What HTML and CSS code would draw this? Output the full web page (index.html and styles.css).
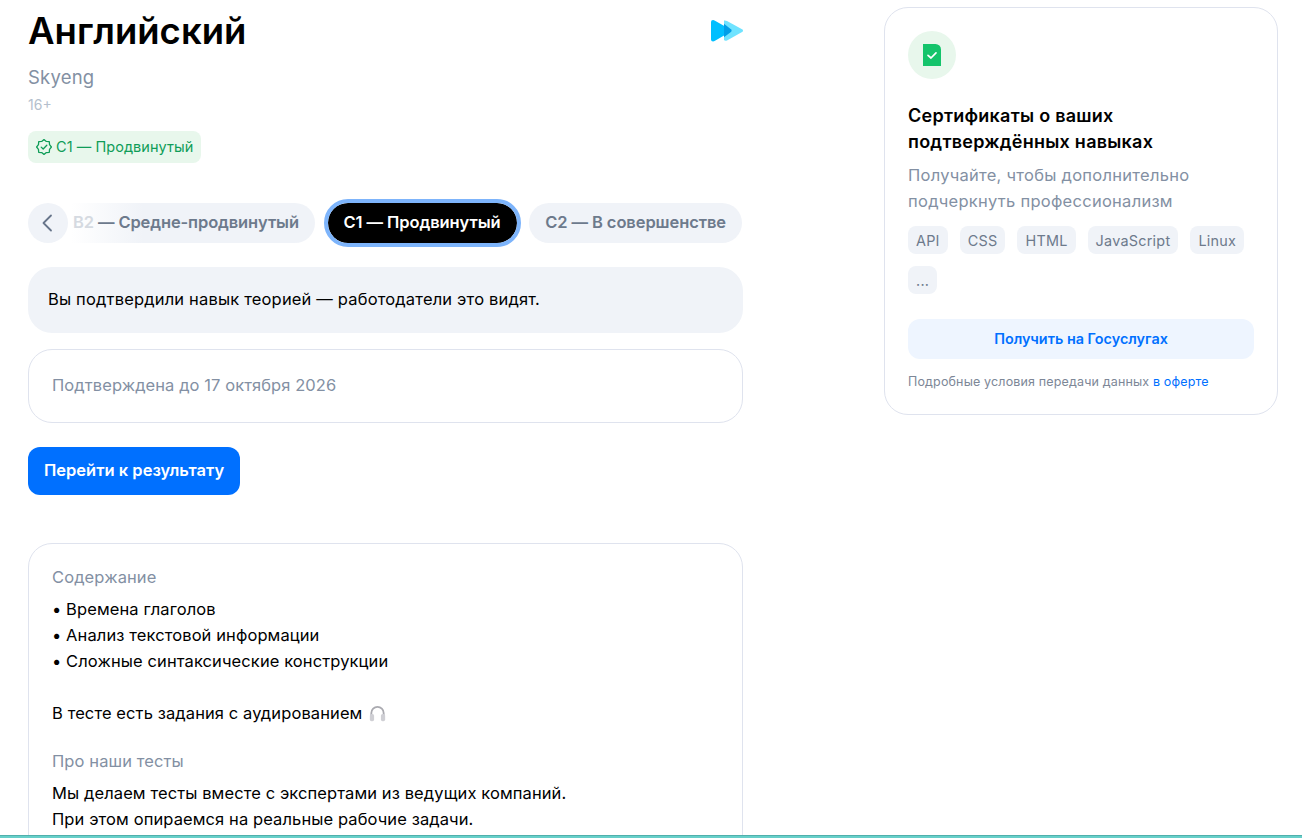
FILE: index.html
```html
<!DOCTYPE html>
<html lang="ru">
<head>
<meta charset="utf-8">
<title>Английский</title>
<link rel="stylesheet" href="styles.css">
</head>
<body>
<div class="page">
  <main class="main">
    <header class="head">
      <div>
        <h1 class="title">Английский</h1>
        <div class="vendor">Skyeng</div>
        <div class="age">16+</div>
      </div>
      <svg class="logo" width="32.5" height="24" viewBox="1 0 32.5 24">
        <path d="M14 1.5 Q15.5 1.200 17 2 L32.500 10.600 Q33.500 11.700 32.500 12.800 L17 21.500 Q15 22.300 14 21 Z" fill="#6fe3ff"/>
        <path d="M1 3 Q1 1 3 1 Q4 1 5 1.700 L20.500 10.600 Q22 11.700 20.500 12.800 L5 21.800 Q4 22.400 3 22.400 Q1 22.400 1 20.400 Z" fill="#00bfff"/>
        <path d="M14 4.700 L21.200 10.600 Q22 11.700 21.200 12.800 L14 18.300 Z" fill="#009ee8"/>
      </svg>
    </header>
    <div class="badge">
      <svg width="16" height="16" viewBox="0 0 16 16" fill="none" stroke="#0f9d58" stroke-width="1.300" stroke-linejoin="round" stroke-linecap="round">
        <path d="M8 .6 10.300 2.460 13.300 2.700 13.540 5.700 15.400 8 13.540 10.300 13.300 13.300 10.300 13.540 8 15.400 5.700 13.540 2.700 13.300 2.460 10.300 .6 8 2.460 5.700 2.700 2.700 5.700 2.460Z"/>
        <path d="M5.200 8.100 7.200 10 10.800 6.300"/>
      </svg>
      <span>C1 — Продвинутый</span>
    </div>
    <div class="levels">
      <div class="level level-fade"><span class="fade-text">B2</span> — Средне-продвинутый</div>
      <div class="level level-active">C1 — Продвинутый</div>
      <div class="level">C2 — В совершенстве</div>
      <button class="back" aria-label="Назад">
        <svg class="back-icon" width="12" height="18" viewBox="0 0 12 18" fill="none" stroke="#67758a" stroke-width="1.800" stroke-linecap="round" stroke-linejoin="round"><path d="M10 1.500 2.500 9l7.500 7.500"/></svg>
      </button>
    </div>
    <div class="note">Вы подтвердили навык теорией — работодатели это видят.</div>
    <div class="valid">Подтверждена до 17 октября 2026</div>
    <a class="primary" href="#">Перейти к результату</a>
    <section class="content">
      <div class="label">Содержание</div>
      <p class="line">• Времена глаголов</p>
      <p class="line">• Анализ текстовой информации</p>
      <p class="line">• Сложные синтаксические конструкции</p>
      <p class="line line-gap">В тесте есть задания с аудированием <svg class="phones" width="17" height="17" viewBox="0 0 16 16" fill="none"><path d="M2.200 10V7.500a5.800 5.800 0 0 1 11.600 0V10" stroke="#aaaab0" stroke-width="1.700"/><rect x=".8" y="8.500" width="4" height="6.800" rx="1.600" fill="#cfcfd4"/><rect x="11.200" y="8.500" width="4" height="6.800" rx="1.600" fill="#cfcfd4"/></svg></p>
      <div class="label label-gap">Про наши тесты</div>
      <p class="line">Мы делаем тесты вместе с экспертами из ведущих компаний.</p>
      <p class="line">При этом опираемся на реальные рабочие задачи.</p>
    </section>
  </main>
  <aside class="card">
    <div class="card-icon">
      <svg width="18" height="22" viewBox="0 0 18 22"><path d="M0 0H12.500A5.500 5.500 0 0 1 18 5.500V22H0Z" fill="#14c46b"/><path d="M5 11.300 8 14 13 8.800" fill="none" stroke="#fff" stroke-width="1.700" stroke-linecap="round" stroke-linejoin="round"/></svg>
    </div>
    <h2 class="card-title">Сертификаты о ваших подтверждённых навыках</h2>
    <p class="card-text">Получайте, чтобы дополнительно подчеркнуть профессионализм</p>
    <div class="tags">
      <span class="tag">API</span><span class="tag">CSS</span><span class="tag">HTML</span><span class="tag">JavaScript</span><span class="tag">Linux</span><span class="tag">...</span>
    </div>
    <a class="secondary" href="#">Получить на Госуслугах</a>
    <p class="terms">Подробные условия передачи данных <a href="#">в оферте</a></p>
  </aside>
</div>
<div class="bottom-bar"></div>
</body>
</html>
```
FILE: styles.css
```css
* { box-sizing: border-box; }
html, body { height: 100%; margin: 0; overflow: hidden; }
body { font-family: Inter, "Noto Sans", sans-serif; color: #000; background: #fff; position: relative; }
.page { display: flex; align-items: flex-start; padding: 7px 24px 0 28px; gap: 141px; height: 835px; overflow: hidden; }
.main { width: 715px; flex: none; margin-top: -7px; }
.head { display: flex; justify-content: space-between; align-items: flex-start; }
.title { margin: 8px 0 0; font-size: 36.500px; line-height: 46px; font-weight: 600; }
.vendor { margin-top: 10px; font-size: 18.500px; line-height: 26px; color: #8390a3; letter-spacing: .2px; }
.age { margin-top: 5px; font-size: 14px; line-height: 20px; color: #b4bfcd; }
.logo { margin-top: 19px; }
.badge { display: inline-flex; align-items: center; gap: 4px; height: 32px; margin-top: 16px; padding: 0 8px 1px; border-radius: 8px; background: #e8f7ec; color: #0f9d58; font-size: 14.500px; letter-spacing: .05px; }
.levels { position: relative; display: flex; align-items: center; gap: 12.500px; margin-top: 36px; height: 48px; }
.level { display: flex; align-items: center; height: 40px; padding: 0 16px 3px; border-radius: 20px; background: #f0f3f8; color: #6d7a8c; font-size: 16.500px; font-weight: 600; white-space: nowrap; letter-spacing: -.08px; }
.level-fade { width: 287px; padding-left: 45px; background: linear-gradient(90deg, #fff 15%, #f0f3f8 40%); white-space: pre; letter-spacing: -.12px; }
.fade-text { color: #d5dae1; }
.level-active { background: #000; color: #fff; outline: 4px solid #7db4fb; }
.back { position: absolute; left: 0; top: 4px; width: 40px; height: 40px; border: 0; padding: 0; border-radius: 50%; background: #f0f3f8; display: flex; align-items: center; justify-content: center; }
.back-icon { margin-right: 2px; }
.note { margin-top: 20px; height: 66px; display: flex; align-items: center; padding: 0 20px 3px; border-radius: 24px; background: #f0f3f8; font-size: 16.500px; letter-spacing: .17px; }
.valid { margin-top: 16px; height: 74px; display: flex; align-items: center; padding: 0 23px 3px; border: 1px solid #dfe3ee; border-radius: 24px; color: #8390a3; font-size: 16.500px; letter-spacing: .08px; }
.primary { display: inline-flex; align-items: center; margin-top: 24px; height: 48px; padding: 0 16px 3px; border-radius: 12px; background: #0070ff; color: #fff; font-size: 16.500px; font-weight: 600; text-decoration: none; }
.content { margin-top: 48px; padding: 20px 23px 0; height: 340px; border: 1px solid #dfe3ee; border-radius: 24px; }
.label { font-size: 16.500px; line-height: 26px; color: #8390a3; letter-spacing: .1px; }
.label-gap { margin-top: 22px; }
.line { margin: 0; font-size: 16.500px; line-height: 26px; letter-spacing: .1px; }
.label + .line { margin-top: 6px; }
.line-gap { margin-top: 26px; }
.phones { vertical-align: -3px; margin-left: 2px; }
.card { width: 394px; flex: none; height: 408px; padding: 23px; border: 1px solid #dfe3ee; border-radius: 24px; }
.card-icon { width: 48px; height: 48px; border-radius: 50%; background: #e8f7ec; display: flex; align-items: center; justify-content: center; }
.card-title { margin: 24px 0 0; font-size: 18px; line-height: 26px; font-weight: 600; letter-spacing: .25px; }
.card-text { margin: 7px 0 0; font-size: 16.500px; line-height: 26px; color: #8390a3; letter-spacing: .27px; }
.tags { display: flex; flex-wrap: wrap; gap: 12px; margin-top: 12px; }
.tag { display: flex; align-items: center; height: 28px; padding: 0 8px; border-radius: 8px; background: #f0f3f8; color: #6d7a8c; font-size: 14.400px; letter-spacing: .25px; }
.secondary { display: flex; align-items: center; justify-content: center; height: 40px; margin-top: 25px; padding-bottom: 2px; border-radius: 12px; background: #eef5ff; color: #0070ff; font-size: 14.400px; font-weight: 600; text-decoration: none; }
.terms { margin: 15px 0 0; font-size: 12.500px; line-height: 16px; color: #7d8797; letter-spacing: .15px; }
.terms a { color: #0070ff; text-decoration: none; }
.bottom-bar { position: absolute; left: 0; right: 0; bottom: 0; height: 3px; background: #66cfc9; border-top: 1px solid #50b0ac; }
```
